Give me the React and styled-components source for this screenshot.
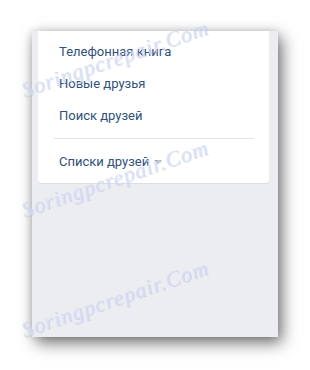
import React from 'react';
import styled, { createGlobalStyle } from 'styled-components';

const GlobalStyle = createGlobalStyle`
    html, body {
        margin: 0;
        padding: 0;
        background: #ffffff;
    }
    body {
        font-family: Roboto, "Open Sans", "Liberation Sans", sans-serif;
    }
`;

const Page = styled.div`
    position: relative;
    width: 310px;
    height: 370px;
    padding: 31px 0 0 32px;
    box-sizing: border-box;
    overflow: hidden;
`;

const Panel = styled.div`
    width: 246px;
    height: 306px;
    background: #ecedf1;
    box-shadow: 4px 6px 15px rgba(0, 0, 0, 0.55), -1px 0 8px rgba(0, 0, 0, 0.12);
    padding: 0 9px 0 6px;
    box-sizing: border-box;
`;

const Card = styled.div`
    background: #ffffff;
    border-radius: 0 0 3px 3px;
    box-shadow: 0 1px 0 #dcdee4;
    padding: 4px 0 6px;
`;

const Item = styled.div`
    display: flex;
    align-items: center;
    height: 32px;
    padding-left: 21px;
    font-size: 13px;
    color: #2f5079;
    cursor: pointer;
`;

const Divider = styled.div`
    height: 1px;
    margin: 7px 15px 6px 16px;
    background: #e1e3e8;
`;

const Arrow = styled.span`
    display: inline-block;
    margin-left: 5px;
    margin-top: 2px;
    width: 0;
    height: 0;
    border-left: 4px solid transparent;
    border-right: 4px solid transparent;
    border-top: 4px solid #a9b0bb;
`;

const Watermark = styled.div`
    position: absolute;
    left: ${p => p.x}px;
    top: ${p => p.y}px;
    transform: rotate(-19deg);
    transform-origin: left center;
    font-family: "Liberation Serif", serif;
    font-style: italic;
    font-size: 22px;
    letter-spacing: 1px;
    color: rgba(214, 221, 245, 0.8);
    text-shadow: 1px 1px 0 rgba(160, 175, 220, 0.35);
    white-space: nowrap;
    pointer-events: none;
`;

const menu = ['Телефонная книга', 'Новые друзья', 'Поиск друзей'];

const App = () => {
    return (
        <Page>
            <GlobalStyle />
            <Panel>
                <Card>
                    {menu.map(label => (
                        <Item key={label}>{label}</Item>
                    ))}
                    <Divider />
                    <Item>
                        Списки друзей
                        <Arrow />
                    </Item>
                </Card>
            </Panel>
            {[78, 198, 318].map(y => (
                <Watermark key={y} x={22} y={y}>Soringpcrepair.Com</Watermark>
            ))}
        </Page>
    );
};

export default App;
